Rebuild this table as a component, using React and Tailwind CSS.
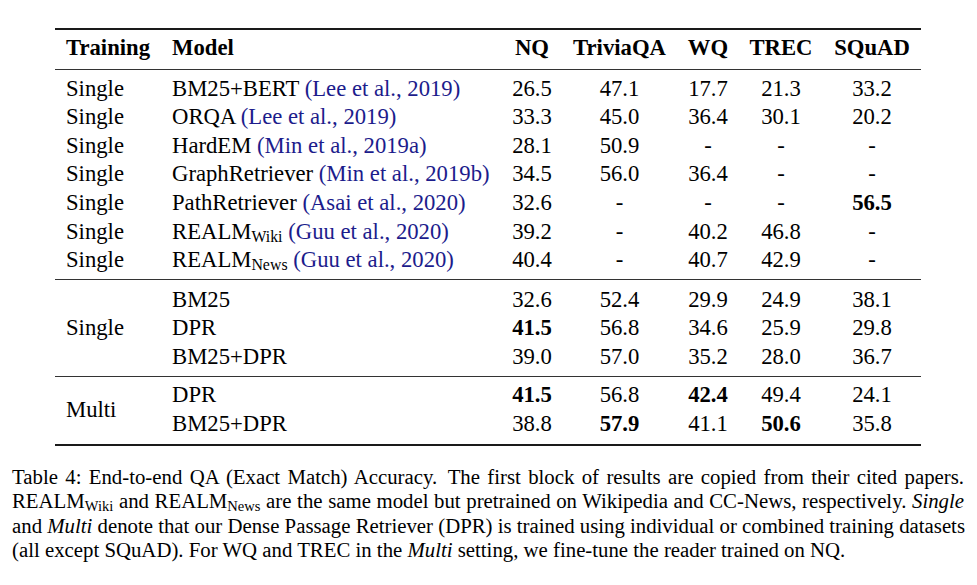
import React from "react";

const COLS = "grid grid-cols-[106px_341px_60px_115px_62px_84px_98px]";

function Cite({ children }) {
  return <span className="text-[#1c1c8c]">{children}</span>;
}

function Sub({ children }) {
  return <span className="text-[0.7em] leading-none align-[-0.22em]">{children}</span>;
}

function Num({ v }) {
  const bold = typeof v === "string" && v.endsWith("*");
  const t = bold ? v.slice(0, -1) : v;
  return <div className={"text-center " + (bold ? "font-bold" : "")}>{t}</div>;
}

const block1 = [
  [<>BM25+BERT <Cite>(Lee et al., 2019)</Cite></>, ["26.5", "47.1", "17.7", "21.3", "33.2"]],
  [<>ORQA <Cite>(Lee et al., 2019)</Cite></>, ["33.3", "45.0", "36.4", "30.1", "20.2"]],
  [<>HardEM <Cite>(Min et al., 2019a)</Cite></>, ["28.1", "50.9", "-", "-", "-"]],
  [<>GraphRetriever <Cite>(Min et al., 2019b)</Cite></>, ["34.5", "56.0", "36.4", "-", "-"]],
  [<>PathRetriever <Cite>(Asai et al., 2020)</Cite></>, ["32.6", "-", "-", "-", "56.5*"]],
  [<>REALM<Sub>Wiki</Sub> <Cite>(Guu et al., 2020)</Cite></>, ["39.2", "-", "40.2", "46.8", "-"]],
  [<>REALM<Sub>News</Sub> <Cite>(Guu et al., 2020)</Cite></>, ["40.4", "-", "40.7", "42.9", "-"]],
];

const block2 = [
  ["BM25", ["32.6", "52.4", "29.9", "24.9", "38.1"]],
  ["DPR", ["41.5*", "56.8", "34.6", "25.9", "29.8"]],
  ["BM25+DPR", ["39.0", "57.0", "35.2", "28.0", "36.7"]],
];

const block3 = [
  ["DPR", ["41.5*", "56.8", "42.4*", "49.4", "24.1"]],
  ["BM25+DPR", ["38.8", "57.9*", "41.1", "50.6*", "35.8"]],
];

function RowCells({ model, vals }) {
  return (
    <>
      <div className="pl-[11px] whitespace-nowrap">{model}</div>
      {vals.map((v, i) => (
        <Num key={i} v={v} />
      ))}
    </>
  );
}

function SpanBlock({ label, rows, span, extra }) {
  return (
    <div className={COLS + " " + extra}>
      <div className={"pl-[11px] flex items-center " + span}>{label}</div>
      {rows.map(([m, v], i) => (
        <RowCells key={i} model={m} vals={v} />
      ))}
    </div>
  );
}

export default function App() {
  return (
    <div className="w-[977px] h-[585px] bg-white text-black font-['Liberation_Serif','Times_New_Roman',serif] overflow-hidden">
      <div className="pt-[28px] pl-[55px]">
        <div className="w-[866px] border-t-2 border-b-2 border-[#1a1a1a] text-[22.7px] leading-[28.6px]">
          <div className={COLS + " font-bold pt-[4px] pb-[6px] border-b border-[#333]"}>
            <div className="pl-[11px]">Training</div>
            <div className="pl-[11px]">Model</div>
            <div className="text-center">NQ</div>
            <div className="text-center">TriviaQA</div>
            <div className="text-center">WQ</div>
            <div className="text-center">TREC</div>
            <div className="text-center">SQuAD</div>
          </div>
          <div className={COLS + " pt-[5px] pb-[4.5px] border-b border-[#333]"}>
            {block1.map(([m, v], i) => (
              <React.Fragment key={i}>
                <div className="pl-[11px]">Single</div>
                <RowCells model={m} vals={v} />
              </React.Fragment>
            ))}
          </div>
          <SpanBlock
            label="Single"
            rows={block2}
            span="row-span-3"
            extra="pt-[5.5px] pb-[4.5px] border-b border-[#333]"
          />
          <SpanBlock label="Multi" rows={block3} span="row-span-2 pt-[2px]" extra="pt-[4px] pb-[5.5px]" />
        </div>
      </div>
      <div className="mt-[19.5px] ml-[12px] w-[952px] text-[20.8px] leading-[24px]">
        <div className="text-justify [text-align-last:justify] whitespace-nowrap">
          Table 4: End-to-end QA (Exact Match) Accuracy.{"\u2002"}The first block of results are copied from their cited papers.
        </div>
        <div className="text-justify [text-align-last:justify] whitespace-nowrap">
          REALM<Sub>Wiki</Sub> and REALM<Sub>News</Sub> are the same model but pretrained on Wikipedia and CC-News, respectively. <i>Single</i>
        </div>
        <div className="text-justify [text-align-last:justify] whitespace-nowrap">
          and <i>Multi</i> denote that our Dense Passage Retriever (DPR) is trained using individual or combined training datasets
        </div>
        <div className="whitespace-nowrap">
          (all except SQuAD). For WQ and TREC in the <i>Multi</i> setting, we fine-tune the reader trained on NQ.
        </div>
      </div>
    </div>
  );
}
